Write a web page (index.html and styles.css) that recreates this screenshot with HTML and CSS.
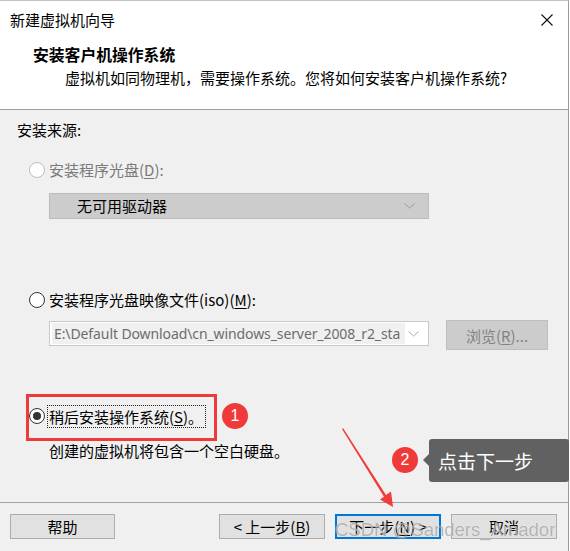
FILE: index.html
```html
<!DOCTYPE html>
<html lang="zh-CN">
<head>
<meta charset="utf-8">
<title>新建虚拟机向导</title>
<link rel="stylesheet" href="styles.css">
</head>
<body>
<div class="window">
  <div class="titlebar">
    <span class="title-text">新建虚拟机向导</span>
    <svg class="close" width="12" height="12" viewBox="0 0 12 12"><path d="M0.5 0.5 L11.5 11.5 M11.5 0.5 L0.5 11.5" stroke="#111" stroke-width="1.1" fill="none"/></svg>
  </div>
  <div class="header">
    <div class="h-title">安装客户机操作系统</div>
    <div class="h-sub">虚拟机如同物理机，需要操作系统。您将如何安装客户机操作系统?</div>
  </div>
  <div class="content">
    <div class="src-label">安装来源:</div>

    <div class="option opt-disc disabled">
      <span class="radio"></span>
      <span class="opt-text">安装程序光盘(<u>D</u>):</span>
    </div>
    <div class="select">
      <span class="select-text">无可用驱动器</span>
      <svg class="chev" width="11" height="6" viewBox="0 0 11 6"><path d="M0.5 0.5 L5.5 5 L10.5 0.5" stroke="#9a9a9a" stroke-width="1" fill="none"/></svg>
    </div>

    <div class="option opt-iso">
      <span class="radio"></span>
      <span class="opt-text">安装程序光盘映像文件(iso)(<u>M</u>):</span>
    </div>
    <div class="iso-row">
      <div class="combo">
        <span class="combo-text">E:\Default Download\cn_windows_server_2008_r2_sta</span>
        <svg class="chev" width="11" height="6" viewBox="0 0 11 6"><path d="M0.5 0.5 L5.5 5 L10.5 0.5" stroke="#a8a8a8" stroke-width="1" fill="none"/></svg>
      </div>
      <div class="browse">浏览(<u>R</u>)...</div>
    </div>

    <div class="option opt-later">
      <span class="radio checked"></span>
      <span class="opt-text focus">稍后安装操作系统(<u>S</u>)。</span>
    </div>
    <div class="desc">创建的虚拟机将包含一个空白硬盘。</div>
  </div>
  <div class="footer">
    <div class="btn btn-help">帮助</div>
    <div class="btn-group">
      <div class="btn">&lt; 上一步(<u>B</u>)</div>
      <div class="btn btn-primary">下一步(<u>N</u>) &gt;</div>
      <div class="btn">取消</div>
    </div>
  </div>

  <div class="anno-box"></div>
  <div class="badge badge-1">1</div>
  <div class="badge badge-2">2</div>
  <div class="tip">点击下一步</div>
  <svg class="arrow" width="80" height="100" viewBox="0 0 80 100">
    <polygon points="2,2 3.2,1.3 46,68 51,64.5 53,80 40,72.5 44,69.8" fill="#f23b3b"/>
  </svg>
  <div class="watermark">CSDN @Sanders_Amador</div>
</div>
</body>
</html>
```

FILE: styles.css
```css
* { box-sizing: border-box; }

html, body {
  margin: 0;
  padding: 0;
  background: #ffffff;
}

body {
  width: 570px;
  height: 551px;
  overflow: hidden;
  font-family: "Noto Sans CJK SC", "Noto Sans", sans-serif;
  font-size: 15px;
  color: #000;
}

.window {
  position: relative;
  width: 569px;
  height: 551px;
  border-right: 1px solid #9c9c9c;
  border-top: 1px solid #c4c4c4;
  display: flex;
  flex-direction: column;
  background: #f0f0f0;
}

u { text-decoration: underline; text-underline-offset: 2px; }

.titlebar {
  background: #fff;
  height: 37px;
  display: flex;
  align-items: center;
  justify-content: space-between;
  padding: 0 15px 0 10px;
}

.title-text {
  font-size: 15px;
  line-height: 20px;
  margin-top: 1px;
}

.header {
  background: #fff;
  height: 72px;
  border-bottom: 1px solid #a0a0a0;
  padding-top: 7px;
}

.h-title {
  font-size: 15.8px;
  font-weight: bold;
  line-height: 20px;
  padding-left: 33px;
}

.h-sub {
  font-size: 15px;
  line-height: 20px;
  padding-left: 65px;
  margin-top: 3px;
}

.content {
  flex: 1;
  padding-left: 17px;
  display: flex;
  flex-direction: column;
  align-items: flex-start;
}

.src-label {
  margin-top: 10px;
  line-height: 20px;
}

.option {
  display: flex;
  align-items: center;
  height: 20px;
  padding-left: 12px;
}

.opt-disc { margin-top: 20px; }
.opt-iso { margin-top: 71px; }
.opt-later { margin-top: 56px; }

.radio {
  width: 16px;
  height: 16px;
  border-radius: 50%;
  border: 1px solid #333;
  background: #fff;
  margin-right: 4px;
  position: relative;
  flex: none;
}

.disabled .radio { border-color: #bcbcbc; }
.disabled .opt-text { color: #7a7a7a; }

.radio.checked::after {
  content: "";
  position: absolute;
  left: 3px;
  top: 3px;
  width: 8px;
  height: 8px;
  border-radius: 50%;
  background: #333;
}

.opt-text { line-height: 20px; }

.opt-text.focus {
  border: 1px dotted #222;
  line-height: 21px;
  padding: 0 2px 0 1px;
  margin-left: -2px;
}

.select {
  margin-top: 13px;
  margin-left: 32px;
  width: 380px;
  height: 26px;
  background: #cccccc;
  border: 1px solid #bcbcbc;
  display: flex;
  align-items: center;
  justify-content: space-between;
  padding: 0 13px 0 27px;
}

.select-text { line-height: 20px; }

.iso-row {
  margin-top: 10px;
  margin-left: 32px;
  display: flex;
  align-items: flex-start;
}

.combo {
  margin-top: 1px;
  width: 380px;
  height: 25px;
  background: #fff;
  border: 1px solid #c8c8c8;
  display: flex;
  align-items: center;
  justify-content: space-between;
  padding: 0 9px 0 2px;
}

.combo-text {
  background: #f0f0f0;
  color: #6d6d6d;
  line-height: 21px;
  padding-left: 2px;
  white-space: nowrap;
  overflow: hidden;
  width: 353px;
  font-family: "Noto Sans", "Noto Sans CJK SC", sans-serif;
  font-size: 14px;
  letter-spacing: -0.1px;
}

.browse {
  margin-left: 17px;
  width: 102px;
  height: 30px;
  background: #cccccc;
  border: 1px solid #bfbfbf;
  color: #838383;
  display: flex;
  align-items: center;
  justify-content: center;
}

.desc {
  margin-top: 15px;
  margin-left: 32px;
  line-height: 20px;
}

.footer {
  height: 49px;
  border-top: 1px solid #a0a0a0;
  display: flex;
  justify-content: space-between;
  align-items: flex-start;
  padding: 11px 11px 0 10px;
}

.btn-group {
  display: flex;
  gap: 10px;
}

.btn {
  width: 106px;
  height: 25px;
  background: #e1e1e1;
  border: 1px solid #adadad;
  display: flex;
  align-items: center;
  justify-content: center;
  line-height: 20px;
}

.btn-help { width: 105px; }

.btn-primary {
  border: 2px solid #0078d7;
}

/* annotations overlaid on the screenshot */
.anno-box {
  position: absolute;
  left: 26px;
  top: 393px;
  width: 191px;
  height: 47px;
  border: 3px solid #f03a3a;
}

.badge {
  position: absolute;
  width: 26px;
  height: 26px;
  border-radius: 50%;
  background: #f03a3a;
  color: #fff;
  font-family: "Liberation Sans", Arial, sans-serif;
  font-size: 16px;
  display: flex;
  align-items: center;
  justify-content: center;
}

.badge-1 { left: 222px; top: 402px; }
.badge-2 { left: 392px; top: 446px; }

.tip {
  position: absolute;
  left: 429px;
  top: 438px;
  width: 140px;
  height: 43px;
  background: #616161;
  border-radius: 3px;
  color: #fff;
  font-size: 19px;
  line-height: 43px;
  padding-left: 9px;
}

.tip::before {
  content: "";
  position: absolute;
  left: -6px;
  top: 15px;
  border-style: solid;
  border-width: 6px 6px 6px 0;
  border-color: transparent #616161 transparent transparent;
}

.arrow {
  position: absolute;
  left: 340px;
  top: 426px;
}

.watermark {
  position: absolute;
  left: 335px;
  top: 518px;
  font-family: "Liberation Sans", Arial, sans-serif;
  font-size: 18.5px;
  color: rgba(90, 90, 90, 0.45);
  text-shadow: 0 0 1px rgba(255,255,255,0.9);
  white-space: nowrap;
  pointer-events: none;
}
```
